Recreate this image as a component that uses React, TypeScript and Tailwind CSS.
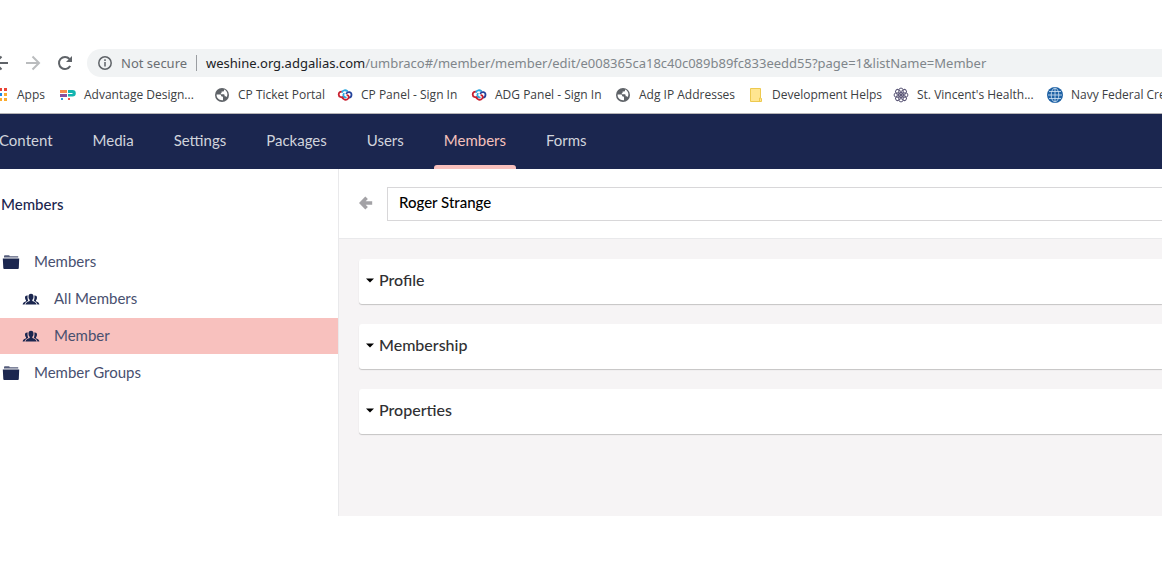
import type { ReactNode } from "react";
import clsx from "clsx";

const navItems = ["Content", "Media", "Settings", "Packages", "Users", "Members", "Forms"];

const treeItems = [
  { label: "Members", icon: "folder", nested: false, active: false },
  { label: "All Members", icon: "users", nested: true, active: false },
  { label: "Member", icon: "users", nested: true, active: true },
  { label: "Member Groups", icon: "folder", nested: false, active: false },
];

const panels = ["Profile", "Membership", "Properties"];

const bookmarks: { label: string; icon: ReactNode; width: string }[] = [
  { label: "Apps", icon: <AppsIcon />, width: "w-[67px]" },
  { label: "Advantage Design...", icon: <AdvantageIcon />, width: "w-[154px]" },
  { label: "CP Ticket Portal", icon: <GlobeIcon />, width: "w-[123px]" },
  { label: "CP Panel - Sign In", icon: <KnotIcon />, width: "w-[134px]" },
  { label: "ADG Panel - Sign In", icon: <KnotIcon />, width: "w-[144px]" },
  { label: "Adg IP Addresses", icon: <GlobeIcon />, width: "w-[133px]" },
  { label: "Development Helps", icon: <NoteIcon />, width: "w-[145px]" },
  { label: "St. Vincent's Health...", icon: <FlowerIcon />, width: "w-[154px]" },
  { label: "Navy Federal Credit", icon: <NavyGlobeIcon />, width: "w-[154px]" },
];

function AppsIcon() {
  const colors = ["#ea4335", "#ea4335", "#ea4335", "#34a853", "#1e88e5", "#fbab2c", "#34a853", "#fbab2c", "#fbab2c"];
  return (
    <svg viewBox="0 0 16 16" className="size-4 shrink-0">
      {colors.map((color, i) => (
        <rect key={i} x={1 + (i % 3) * 5} y={1 + Math.floor(i / 3) * 5} width="3" height="3" fill={color} />
      ))}
    </svg>
  );
}

function AdvantageIcon() {
  return (
    <svg viewBox="0 0 16 16" className="size-4 shrink-0">
      <path d="M0 3h7v3H0z" fill="#f58b4c" />
      <path d="M0 7h7v3H0z" fill="#8a4f9e" />
      <path d="M1 11h2v2H1z" fill="#2f9bdc" />
      <path d="M8 3h4.500a3.300 3.300 0 0 1 0 6.600H8V7h4.500V6H8z" fill="#12b5b0" />
      <path d="M8 11h2v2H8z" fill="#f0524f" />
    </svg>
  );
}

function GlobeIcon() {
  return (
    <svg viewBox="0 0 16 16" className="size-4 shrink-0">
      <circle cx="8" cy="8" r="7" fill="#5f6368" />
      <path d="M2.600 7.600h3.200c.9 0 1.300.5 1.300 1.200 0 .5.300.8.900.8.700 0 1 .4 1 1v2.600C5.500 13.700 2.300 11.200 2.600 7.600z" fill="#fff" />
      <path d="M10 2.600v.8c0 .7-.5 1.200-1.200 1.200H7.600v1c0 .5-.3.700-.8.700v.9h2.700c.7 0 1.100.5 1.100 1.100v1h.9c.6 0 1 .4 1.200.9C14.300 7.400 13.200 3.800 10 2.600z" fill="#fff" />
    </svg>
  );
}

function KnotIcon() {
  return (
    <svg viewBox="0 0 16 16" className="size-4 shrink-0" fill="none" strokeWidth="1.800" strokeLinecap="round">
      <path d="M7 9.800C4.500 11 1.700 9.800 1.700 7.400c0-1.800 1.500-3 3.300-2.700" stroke="#c8202f" />
      <path d="M5.200 4.900C6 3.200 8.500 2.700 10.200 4" stroke="#2aa7df" />
      <path d="M9.500 6.400c1.300-2.200 5-1.600 5 1.400 0 1.800-1.300 2.800-2.600 2.900" stroke="#24439b" />
      <path d="M5.200 10.200c.4 2.600 4.200 3.500 6 1.300 1-1.300.6-3-.9-3.400" stroke="#c8202f" />
      <path d="M8.800 10.300C6.700 10.200 5.600 8.300 6.800 6.800" stroke="#2aa7df" />
    </svg>
  );
}

function NoteIcon() {
  return (
    <svg viewBox="0 0 16 16" className="size-4 shrink-0">
      <path d="M2.500 1.500h10v9.500l1 .5v3h-11z" fill="#ffe590" stroke="#edc94f" />
      <path d="M11.500 14.500v-3.500h1.500" fill="none" stroke="#edc94f" />
    </svg>
  );
}

function FlowerIcon() {
  return (
    <svg viewBox="0 0 16 16" className="size-4 shrink-0" fill="none" stroke="#5a5676" strokeWidth="1">
      {[0, 45, 90, 135, 180, 225, 270, 315].map((angle) => (
        <g key={angle} transform={`rotate(${angle} 8 8)`}>
          <path d="M8 8V4.500" />
          <ellipse cx="8" cy="2.700" rx="1.900" ry="1.600" />
        </g>
      ))}
      <circle cx="8" cy="8" r="2.600" />
    </svg>
  );
}

function NavyGlobeIcon() {
  return (
    <svg viewBox="0 0 16 16" className="size-4 shrink-0">
      <circle cx="8" cy="8" r="8" fill="#1f62a5" />
      <g fill="none" stroke="#d6e6f5" strokeWidth=".8">
        <path d="M8 1v14M1 8h14M2 4.500h12M2 11.500h12" />
        <ellipse cx="8" cy="8" rx="3.800" ry="6.900" />
      </g>
    </svg>
  );
}

function FolderIcon() {
  return (
    <svg viewBox="0 0 18 16" className="h-4 w-[18px] shrink-0" fill="#1b264f">
      <path d="M2 2.500c0-.8.400-1.300 1.200-1.300h3.400c.8 0 1 .5 1.200 1.100h8.400v1.200H2z" opacity=".75" />
      <path d="M.8 4.500h16.400l-.4 9.600c0 .6-.3.900-.9.900H2.200c-.6 0-.9-.3-.9-.9z" />
    </svg>
  );
}

function UsersIcon() {
  return (
    <svg viewBox="0 0 18 16" className="h-4 w-[18px] shrink-0" fill="#1b264f">
      <path d="M9 2.800c1.700 0 2.600 1.200 2.500 2.900 0 1.500-.5 2.500-1.200 3.200v1c1.800.8 4 1.200 4.400 3.700H3.300c.4-2.500 2.600-2.900 4.400-3.700v-1C7 8.200 6.500 7.200 6.500 5.700 6.400 4 7.300 2.800 9 2.800z" />
      <path d="M5.700 4.600c-1.500-.4-2.800.5-2.700 2.200 0 1.100.4 1.900 1 2.500v.9c-1.300.7-3.100 1-3.400 3.400h2c.4-2.200 1.900-2.900 3.600-3.700-.5-1.400-1-3.400-.5-5.300zM12.300 4.600c1.500-.4 2.800.5 2.700 2.200 0 1.100-.4 1.900-1 2.500v.9c1.300.7 3.100 1 3.400 3.400h-2c-.4-2.200-1.900-2.900-3.600-3.700.5-1.400 1-3.400.5-5.300z" />
    </svg>
  );
}

function BrowserChrome() {
  return (
    <header className="border-b border-[#b6b4b6] font-['Open_Sans',sans-serif]">
      <div className="flex h-7 items-center">
        <div className="-ml-[7px] flex w-[94px] shrink-0 items-center gap-4 text-[#5f6368]">
          <button aria-label="Back">
            <svg viewBox="0 0 16 16" className="size-4" fill="none" stroke="currentColor" strokeWidth="2">
              <path d="M15 8H2M8.500 1.500 2 8l6.500 6.500" />
            </svg>
          </button>
          <button aria-label="Forward" className="text-[#babcbe]">
            <svg viewBox="0 0 16 16" className="size-4" fill="none" stroke="currentColor" strokeWidth="2">
              <path d="M1 8h13M7.500 1.500 14 8l-6.500 6.500" />
            </svg>
          </button>
          <button aria-label="Reload">
            <svg viewBox="0 0 16 16" className="size-4" fill="none" stroke="currentColor" strokeWidth="2">
              <path d="M13.200 11A6 6 0 1 1 12.500 4" />
              <path d="M15 1v6H9z" fill="currentColor" stroke="none" />
            </svg>
          </button>
        </div>
        <div className="flex h-7 min-w-0 flex-1 items-center rounded-l-full bg-[#f1f3f4] pl-[10px] font-['Noto_Sans',sans-serif] text-[13px] whitespace-nowrap">
          <svg viewBox="0 0 16 16" className="size-4 shrink-0" fill="none" stroke="#5f6368" strokeWidth="1.500">
            <circle cx="8" cy="8" r="6.200" />
            <path d="M8 7v4.500M8 4.300v1.600" />
          </svg>
          <span className="ml-2 w-[75px] shrink-0 pt-px text-[#6b6f73]">Not secure</span>
          <span className="mr-[9px] h-4 w-px shrink-0 bg-[#9a9da1]" />
          <p className="pt-px text-[#80868b]">
            <span className="text-[#202124]">weshine.org.adgalias.com</span>
            /umbraco#/member/member/edit/e008365ca18c40c089b89fc833eedd55?page=1&amp;listName=Member
          </p>
        </div>
      </div>
      <nav className="-ml-[7px] flex h-9 items-center overflow-hidden text-[12px] text-[#3c4043]">
        {bookmarks.map((item) => (
          <a key={item.label} href="#" className={clsx("flex shrink-0 items-center gap-2 whitespace-nowrap", item.width)}>
            {item.icon}
            {item.label}
          </a>
        ))}
      </nav>
    </header>
  );
}

function MainNav() {
  return (
    <nav className="flex h-[55px] overflow-hidden bg-[#1b264f] text-[15px] text-[#d1d4dc]">
      <ul className="-ml-[11px] flex gap-5">
        {navItems.map((item) => {
          const active = item === "Members";
          return (
            <li key={item}>
              <a href="#" className={clsx("flex h-full flex-col px-[10px] pt-4", active && "text-[#f5c1bc]")}>
                <span className="leading-5">{item}</span>
                {active && <span className="-mx-[10px] mt-auto h-1 rounded-t-[3px] bg-[#f9c0bd]" />}
              </a>
            </li>
          );
        })}
      </ul>
    </nav>
  );
}

function Sidebar() {
  return (
    <aside className="w-[339px] shrink-0 border-r border-[#e9e9eb] text-[15px] text-[#1b264f]">
      <h2 className="px-px pt-[25px] pb-[30px] leading-5 font-medium">Members</h2>
      <ul className="flex flex-col gap-px">
        {treeItems.map((item) => (
          <li key={item.label}>
            <a
              href="#"
              className={clsx(
                "flex h-9 items-center gap-[14px] leading-5 text-[#48506f]",
                item.nested ? "pl-[22px]" : "pl-[2px]",
                item.active && "bg-[#f8c1be]",
              )}
            >
              {item.icon === "folder" ? <FolderIcon /> : <UsersIcon />}
              <span className="pb-[2px]">{item.label}</span>
            </a>
          </li>
        ))}
      </ul>
    </aside>
  );
}

function Editor() {
  return (
    <main className="flex min-w-0 flex-1 flex-col bg-[#f6f4f5]">
      <div className="flex items-center border-b border-[#e9e9eb] bg-white pt-[18px] pb-[17px] pl-5">
        <button aria-label="Back to list" className="mr-[14px] pb-[2px]">
          <svg viewBox="0 0 14 14" className="size-[14px]" fill="none" stroke="#a3a2a6" strokeWidth="3.600">
            <path d="M13.200 7H3M7.600 1.700 2.400 7l5.200 5.300" />
          </svg>
        </button>
        <input
          aria-label="Member name"
          defaultValue="Roger Strange"
          className="h-[34px] min-w-0 flex-1 border border-r-0 border-[#d8d7d9] pb-1 pl-[11px] text-[15px] font-medium text-black outline-none"
        />
      </div>
      <div className="flex flex-col gap-5 py-5 pl-5">
        {panels.map((panel) => (
          <section key={panel} className="rounded-l-[3px] bg-white shadow-[0_1px_1px_rgba(0,0,0,0.2)]">
            <button className="flex h-[45px] w-full items-center gap-1 pb-[3px] pl-[7px] text-[16px] leading-6 font-medium text-[#303033]">
              <svg viewBox="0 0 9 5" className="h-[5px] w-[9px]">
                <path d="M0 .5h8l-4 4z" fill="#000" />
              </svg>
              {panel}
            </button>
          </section>
        ))}
      </div>
    </main>
  );
}

export default function App() {
  return (
    <div className="min-h-screen overflow-x-hidden bg-white pt-[49px] pb-12 font-['Lato',sans-serif]">
      <BrowserChrome />
      <MainNav />
      <div className="flex min-h-[347px]">
        <Sidebar />
        <Editor />
      </div>
    </div>
  );
}
